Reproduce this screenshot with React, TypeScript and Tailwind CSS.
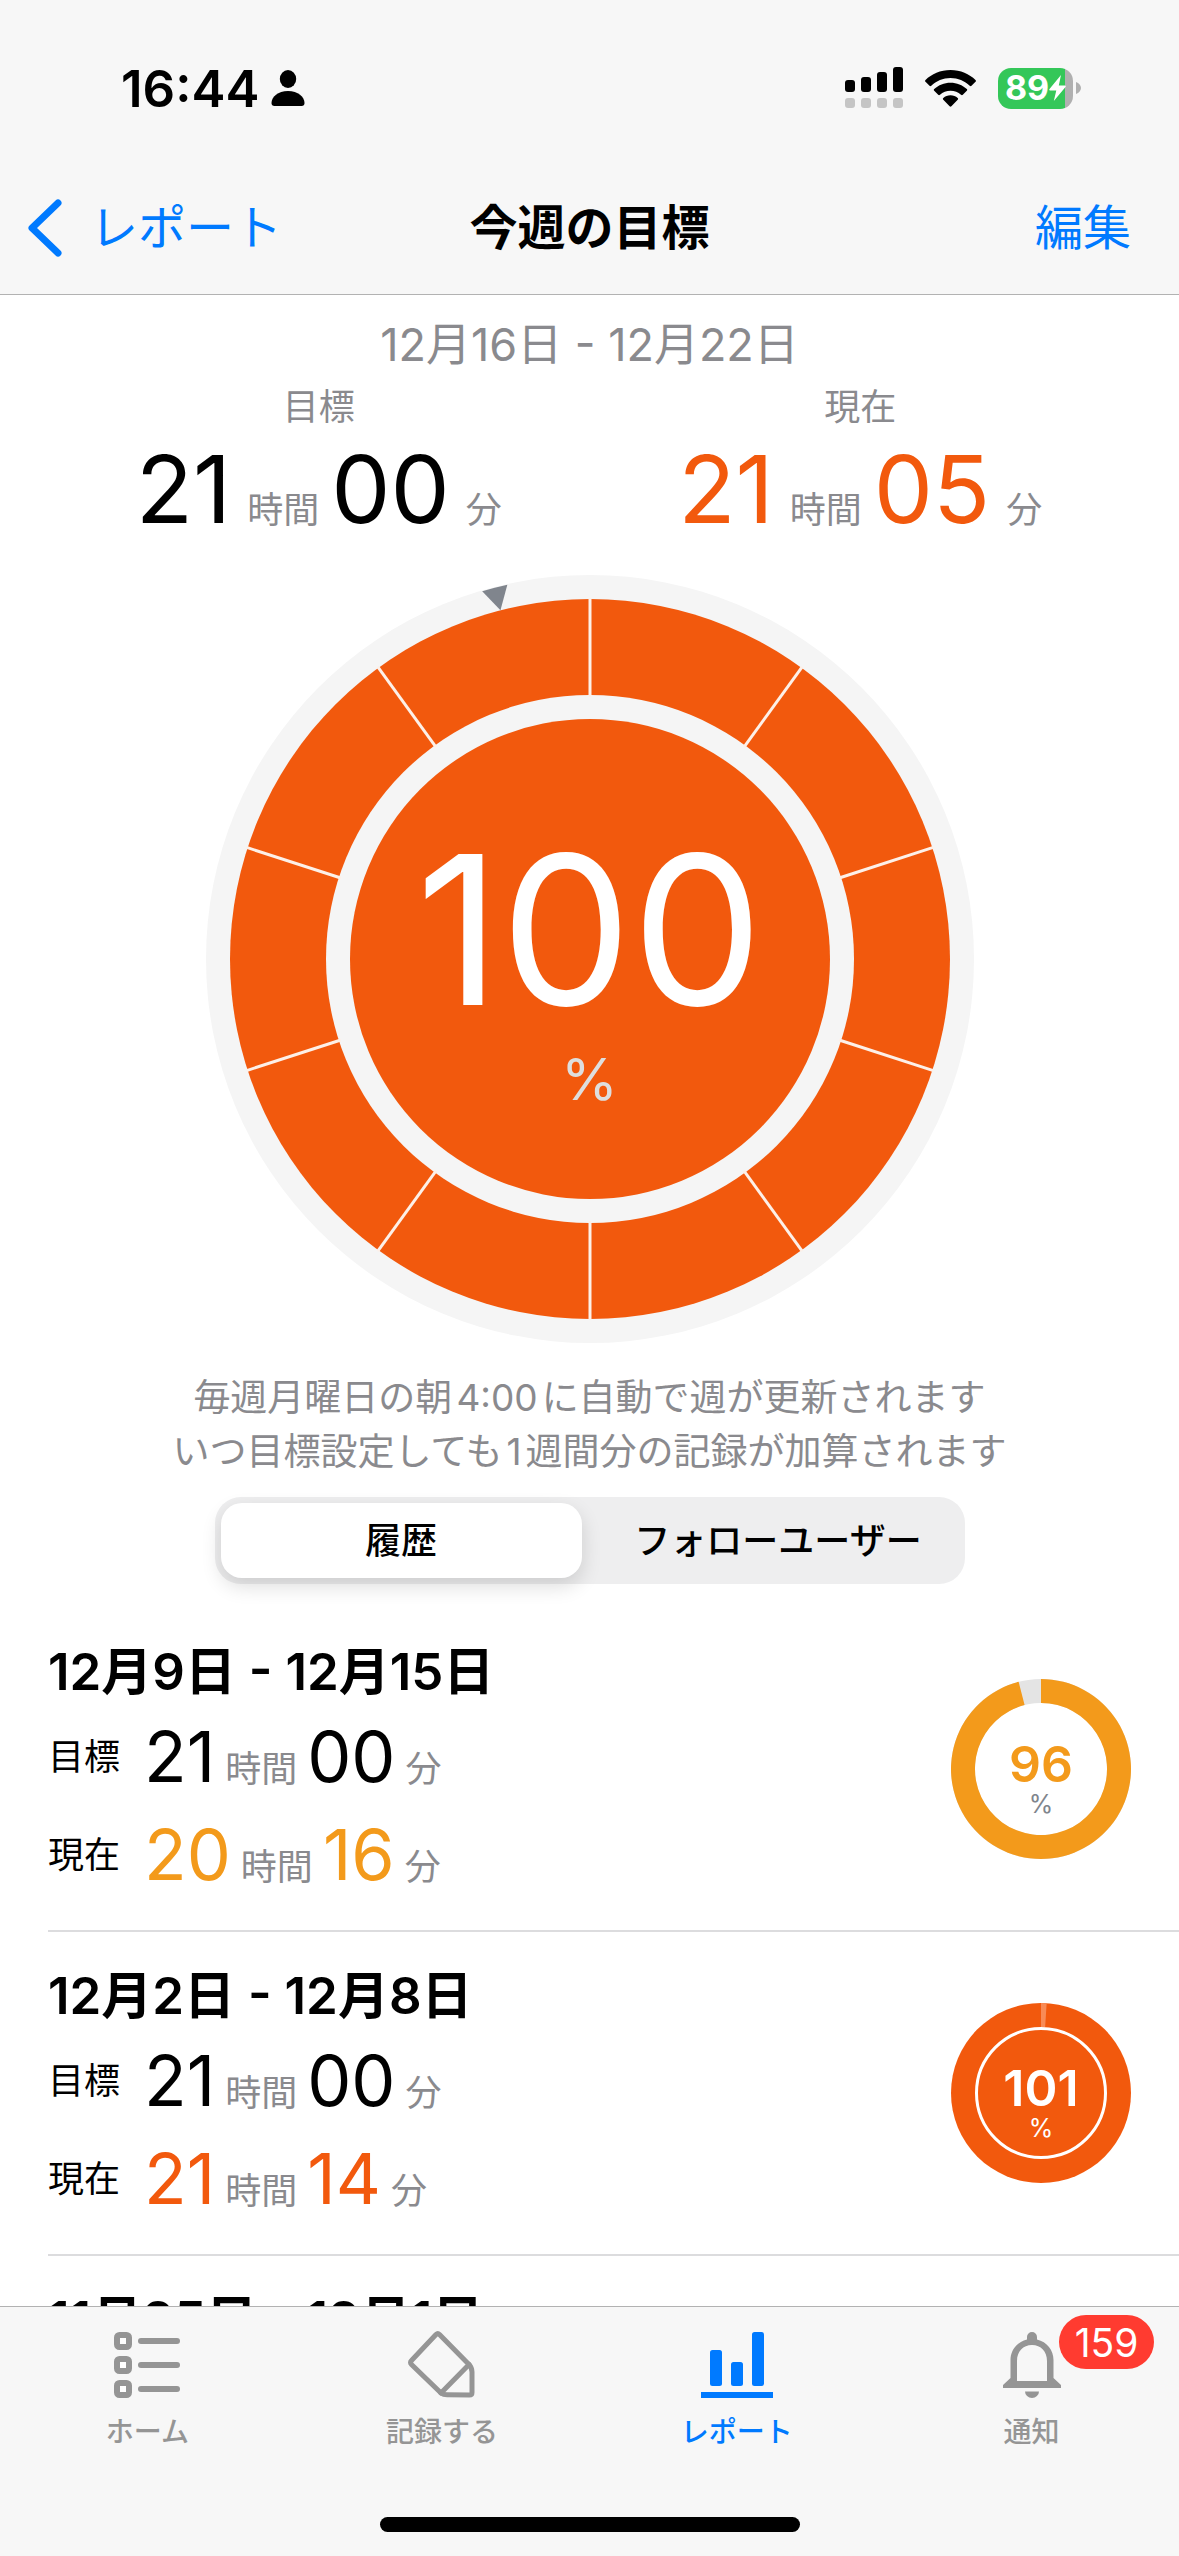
import { useState } from "react";
import type { ReactNode } from "react";

type Duration = { hours: string; minutes: string };

type HistoryEntry = {
  period: string;
  result?: { goal: Duration; current: Duration; percent: number };
};

const history: HistoryEntry[] = [
  {
    period: "12月9日 - 12月15日",
    result: {
      goal: { hours: "21", minutes: "00" },
      current: { hours: "20", minutes: "16" },
      percent: 96,
    },
  },
  {
    period: "12月2日 - 12月8日",
    result: {
      goal: { hours: "21", minutes: "00" },
      current: { hours: "21", minutes: "14" },
      percent: 101,
    },
  },
  { period: "11月25日 - 12月1日" },
];

/** Point on a circle, with the angle measured clockwise from twelve o'clock. */
function polar(cx: number, cy: number, r: number, turn: number) {
  const a = turn * Math.PI * 2;
  return { x: cx + r * Math.sin(a), y: cy - r * Math.cos(a) };
}

function ringSlice(c: number, outer: number, inner: number, from: number, to: number) {
  const a = polar(c, c, outer, from);
  const b = polar(c, c, outer, to);
  const d = polar(c, c, inner, to);
  const e = polar(c, c, inner, from);
  const large = to - from > 0.5 ? 1 : 0;
  return `M${a.x} ${a.y}A${outer} ${outer} 0 ${large} 1 ${b.x} ${b.y}L${d.x} ${d.y}A${inner} ${inner} 0 ${large} 0 ${e.x} ${e.y}Z`;
}

function StatusBar() {
  return (
    <div className="flex h-44 items-center justify-between pr-[98px] pl-[121px]">
      <div className="flex items-center gap-3">
        <span className="text-[51px] leading-none font-semibold">16:44</span>
        <svg className="h-9 w-[34px]" viewBox="0 0 34 36" aria-hidden="true">
          <ellipse cx="17" cy="9" rx="8.2" ry="9" />
          <path d="M17 21C7 21 .5 27 .5 33c0 2 1 3 3 3h27c2 0 3-1 3-3 0-6-6.500-12-16.500-12Z" />
        </svg>
      </div>
      <div className="flex items-center gap-[22px]">
        <svg className="h-[42px] w-[58px]" viewBox="0 0 58 42" aria-hidden="true">
          <rect x="0" y="13" width="10" height="12" rx="3" />
          <rect x="16" y="10" width="10" height="15" rx="3" />
          <rect x="32" y="5" width="10" height="20" rx="3" />
          <rect x="48" y="0" width="10" height="25" rx="3" />
          <g fill="#c5c5c5">
            <rect x="0" y="31" width="10" height="10" rx="3" />
            <rect x="16" y="31" width="10" height="10" rx="3" />
            <rect x="32" y="31" width="10" height="10" rx="3" />
            <rect x="48" y="31" width="10" height="10" rx="3" />
          </g>
        </svg>
        <svg className="h-[37px] w-[51px]" viewBox="0 0 51 37" aria-hidden="true">
          <path d="M25.500 0C15.500 0 6.600 4 .5 10c-.6.6-.6 1.200 0 1.800l4 4c.5.500 1.200.5 1.800 0C11.400 11 18 8 25.500 8s14.100 3 19.200 7.800c.6.5 1.300.5 1.800 0l4-4c.6-.6.6-1.200 0-1.800C44.400 4 35.500 0 25.500 0Z" />
          <path d="M25.500 12.700c-6.300 0-12 2.400-16.300 6.300-.6.600-.6 1.200 0 1.800l4 4c.5.5 1.200.5 1.800 0 2.800-2.500 6.500-4 10.500-4s7.700 1.500 10.500 4c.6.5 1.300.5 1.800 0l4-4c.6-.6.6-1.200 0-1.800-4.300-3.900-10-6.300-16.300-6.300Z" />
          <path d="M25.500 25.300c-2.800 0-5.300 1-7.200 2.700-.6.500-.6 1.200 0 1.800l6.300 6.400c.6.600 1.200.6 1.800 0l6.300-6.400c.6-.6.6-1.300 0-1.800-1.900-1.700-4.400-2.700-7.200-2.700Z" />
        </svg>
        <div className="flex items-center gap-[3px]">
          <div className="flex h-[41px] w-[75px] items-center justify-center rounded-[13px] bg-linear-to-r from-[#34c759] from-90% to-[#b0b0b0] to-90%">
            <span className="text-[34px] leading-none font-bold text-white">89</span>
            <svg className="h-[26px] w-[17px] fill-white" viewBox="0 0 17 26" aria-hidden="true">
              <path d="M12 0 .5 14c-.6.800-.3 1.500.6 1.500h6.200L4.800 26 16.500 12c.6-.8.3-1.500-.6-1.500H9.800Z" />
            </svg>
          </div>
          <svg className="h-3 w-[5px] fill-[#b0b0b0]" viewBox="0 0 5 12" aria-hidden="true">
            <path d="M0 0c3 1 5 3.500 5 6s-2 5-5 6Z" />
          </svg>
        </div>
      </div>
    </div>
  );
}

function NavBar() {
  return (
    <div className="grid grid-cols-3 items-center px-7 pb-3.5 text-5xl leading-[104px]">
      <a href="#report" className="flex items-center gap-7 text-[#007aff]">
        <svg className="h-[58px] w-[34px] shrink-0" viewBox="0 0 34 58" fill="none" stroke="currentColor" strokeWidth="7" strokeLinecap="round" strokeLinejoin="round" aria-hidden="true">
          <path d="M30 4 4 29l26 25" />
        </svg>
        <span className="whitespace-nowrap">レポート</span>
      </a>
      <h1 className="text-center font-bold whitespace-nowrap">今週の目標</h1>
      <button type="button" className="mr-5 justify-self-end text-[#007aff]">
        編集
      </button>
    </div>
  );
}

function BigDuration({ label, value, color }: { label: string; value: Duration; color: string }) {
  return (
    <div className="flex flex-col items-center">
      <h2 className="text-4xl leading-[52px] text-[#8a8a8e]">{label}</h2>
      <p className="flex items-baseline text-4xl leading-none whitespace-nowrap text-[#8a8a8e]">
        <span className={`text-[94px] leading-[112px] ${color}`}>{value.hours}</span>
        <span className="mr-3 ml-4">時間</span>
        <span className={`text-[94px] leading-[112px] ${color}`}>{value.minutes}</span>
        <span className="ml-4">分</span>
      </p>
    </div>
  );
}

function GoalDial() {
  const c = 384;
  const spokes = Array.from({ length: 10 }, (_, i) => i / 10);
  return (
    <div className="relative mx-auto w-[768px] max-w-full">
      <svg className="block w-full" viewBox="0 0 768 768" aria-hidden="true">
        <circle cx={c} cy={c} r="384" fill="#f5f5f5" />
        <circle cx={c} cy={c} r="360" fill="#f2590d" />
        <circle cx={c} cy={c} r="264" fill="#f5f5f5" />
        <circle cx={c} cy={c} r="240" fill="#f2590d" />
        {spokes.map((turn) => {
          const a = polar(c, c, 262, turn);
          const b = polar(c, c, 361, turn);
          return <line key={turn} x1={a.x} y1={a.y} x2={b.x} y2={b.y} stroke="#fdf0e8" strokeWidth="3" />;
        })}
        <path d="M384 24 371 1a384 384 0 0 1 26 0Z" fill="#80858d" transform="rotate(-14.4 384 384)" />
      </svg>
      <div className="absolute inset-0 flex flex-col items-center pt-[234px]">
        <span className="text-[208px] leading-[240px] text-white">100</span>
        <span className="text-[58px] leading-[60px] text-[#dedede]">%</span>
      </div>
    </div>
  );
}

function SegmentedControl() {
  const [tab, setTab] = useState(0);
  return (
    <div role="tablist" className="mx-auto mt-[18px] grid h-[87px] w-[750px] max-w-full grid-cols-2 rounded-[26px] bg-[#eeeeef] p-1.5 text-4xl font-medium">
      {["履歴", "フォローユーザー"].map((label, i) => (
        <button
          key={label}
          type="button"
          role="tab"
          aria-selected={tab === i}
          onClick={() => setTab(i)}
          className={
            tab === i
              ? "mr-2 rounded-[21px] bg-white shadow-[0_8px_20px_rgba(0,0,0,0.14)]"
              : "ml-2 rounded-[21px]"
          }
        >
          {label}
        </button>
      ))}
    </div>
  );
}

function RowDuration({ label, value, color }: { label: string; value: Duration; color: string }) {
  return (
    <div className="flex items-center">
      <dt className="w-24 text-4xl">{label}</dt>
      <dd className="flex items-baseline text-4xl leading-none whitespace-nowrap text-[#8a8a8e]">
        <span className={`text-[70px] leading-[98px] ${color}`}>{value.hours}</span>
        <span className="mx-2.5">時間</span>
        <span className={`text-[70px] leading-[98px] ${color}`}>{value.minutes}</span>
        <span className="ml-2.5">分</span>
      </dd>
    </div>
  );
}

function MiniDial({ percent }: { percent: number }) {
  const reached = percent >= 100;
  const extra = (percent - 100) / 100;
  return (
    <div className="relative size-[180px] shrink-0">
      <svg className="block size-full" viewBox="0 0 180 180" aria-hidden="true">
        {reached ? (
          <>
            <circle cx="90" cy="90" r="90" fill="#f2590d" />
            {extra > 0 && <path d={ringSlice(90, 90, 66, 0, extra)} fill="#f88b56" />}
            <circle cx="90" cy="90" r="64.500" fill="none" stroke="#fff" strokeWidth="3" />
          </>
        ) : (
          <>
            <circle cx="90" cy="90" r="78" fill="none" stroke="#e4e4e4" strokeWidth="24" />
            <path d={ringSlice(90, 90, 66, 0, percent / 100)} fill="#f39a1b" />
          </>
        )}
      </svg>
      <div className={`absolute inset-0 flex flex-col items-center pt-[59px] ${reached ? "text-white" : "text-[#f39a1b]"}`}>
        <span className="text-[50px] leading-[52px] font-semibold">{percent}</span>
        <span className={`text-[25px] leading-7 ${reached ? "" : "text-[#80858d]"}`}>%</span>
      </div>
    </div>
  );
}

function HistoryRow({ entry: { period, result } }: { entry: HistoryEntry }) {
  return (
    <li className="ml-12 flex h-[324px] items-center justify-between border-b-2 border-[#dcdcde] pr-12">
      <div className="h-[270px] pt-2">
        <h3 className="text-[51px] leading-[60px] font-semibold whitespace-nowrap">{period}</h3>
        {result && (
          <dl className="mt-1.5">
            <RowDuration label="目標" value={result.goal} color="text-black" />
            <RowDuration label="現在" value={result.current} color={result.percent >= 100 ? "text-[#f2590d]" : "text-[#f39a1b]"} />
          </dl>
        )}
      </div>
      {result && <MiniDial percent={result.percent} />}
    </li>
  );
}

function HomeIcon() {
  return (
    <svg className="h-[66px] w-[66px]" viewBox="0 0 66 66" fill="currentColor" aria-hidden="true">
      {[0, 24, 48].map((y) => (
        <g key={y}>
          <rect x="3" y={y + 3} width="12" height="12" rx="2.500" fill="#fff" stroke="currentColor" strokeWidth="6" />
          <rect x="24" y={y + 6} width="42" height="6" rx="3" />
        </g>
      ))}
    </svg>
  );
}

function PencilIcon() {
  return (
    <svg className="h-[68px] w-[68px]" viewBox="0 0 68 68" fill="none" stroke="currentColor" strokeWidth="5" strokeLinecap="round" strokeLinejoin="round" aria-hidden="true">
      <path d="M28 3.500 3.500 29.500q-2 2 0 4L33 62 61 33.500 31.500 3.500q-1.700-1.700-3.500 0Z" />
      <path d="M61 33.500q3 3.500 3 7.500v20.500q0 2.500-2.500 2.500L39 63.800q-3.500 0-6-1.800" />
    </svg>
  );
}

function ReportIcon() {
  return (
    <svg className="h-[66px] w-[72px]" viewBox="0 0 72 66" fill="currentColor" aria-hidden="true">
      <rect x="9" y="18" width="12" height="36" rx="2.500" />
      <rect x="30" y="30" width="12" height="24" rx="2.500" />
      <rect x="51" y="0" width="12" height="54" rx="2.500" />
      <rect x="0" y="60" width="72" height="6" />
    </svg>
  );
}

function BellIcon() {
  return (
    <svg className="h-[66px] w-[58px]" viewBox="0 0 58 66" aria-hidden="true">
      <path
        fill="currentColor"
        fillRule="evenodd"
        d="M24 7.500V5a5 5 0 0 1 10 0v2.500C44 10 50.500 18 50.500 28v18L58 53v3H0v-3l7.500-7V28C7.500 18 14 10 24 7.500ZM14 49h30V29c0-9.500-6-16-15-16s-15 6.500-15 16Z"
      />
      <path fill="currentColor" d="M22 59.500h14a7 6.500 0 0 1-14 0Z" />
    </svg>
  );
}

function TabItem({ label, icon, active, badge }: { label: string; icon: ReactNode; active?: boolean; badge?: string }) {
  return (
    <a
      href={`#${label}`}
      aria-current={active ? "page" : undefined}
      className={`flex flex-col items-center gap-3 ${active ? "text-[#007aff]" : "text-[#959595]"}`}
    >
      <span className="relative flex h-[68px] items-center">
        {icon}
        {badge && (
          <span className="absolute -top-4 left-14 flex h-[54px] items-center rounded-full bg-[#ff3b30] px-4 text-[39px] leading-none text-white">
            {badge}
          </span>
        )}
      </span>
      <span className="text-[28px] leading-[42px] font-medium">{label}</span>
    </a>
  );
}

export default function App() {
  return (
    <div lang="ja" className="flex h-screen flex-col bg-white font-['Inter','Noto_Sans_CJK_JP',sans-serif] text-black">
      <header className="shrink-0 border-b border-[#b2b2b2] bg-[#f7f7f7]">
        <StatusBar />
        <NavBar />
      </header>

      <main className="min-h-0 flex-1 overflow-y-auto [scrollbar-width:none]">
        <section>
          <p className="pt-5 text-center text-[45px] leading-[60px] text-[#8a8a8e]">12月16日 - 12月22日</p>
          <div className="mt-1.5 grid grid-cols-2 px-12">
            <BigDuration label="目標" value={{ hours: "21", minutes: "00" }} color="text-black" />
            <BigDuration label="現在" value={{ hours: "21", minutes: "05" }} color="text-[#f2590d]" />
          </div>
          <div className="mt-[30px]">
            <GoalDial />
          </div>
          <p className="mt-7 text-center text-[37px] leading-[54px] text-[#8a8a8e]">
            毎週月曜日の朝<span className="mx-1">4:00</span>に自動で週が更新されます
            <br />
            いつ目標設定しても<span className="mx-1">1</span>週間分の記録が加算されます
          </p>
          <SegmentedControl />
        </section>
        <ul className="mt-6">
          {history.map((entry) => (
            <HistoryRow key={entry.period} entry={entry} />
          ))}
        </ul>
      </main>

      <footer className="shrink-0 border-t border-[#b2b2b2] bg-[#f7f7f7]">
        <nav className="grid grid-cols-4 pt-6">
          <TabItem label="ホーム" icon={<HomeIcon />} />
          <TabItem label="記録する" icon={<PencilIcon />} />
          <TabItem label="レポート" icon={<ReportIcon />} active />
          <TabItem label="通知" icon={<BellIcon />} badge="159" />
        </nav>
        <div className="mx-auto mt-16 mb-6 h-[15px] w-[420px] rounded-full bg-black" />
      </footer>
    </div>
  );
}
